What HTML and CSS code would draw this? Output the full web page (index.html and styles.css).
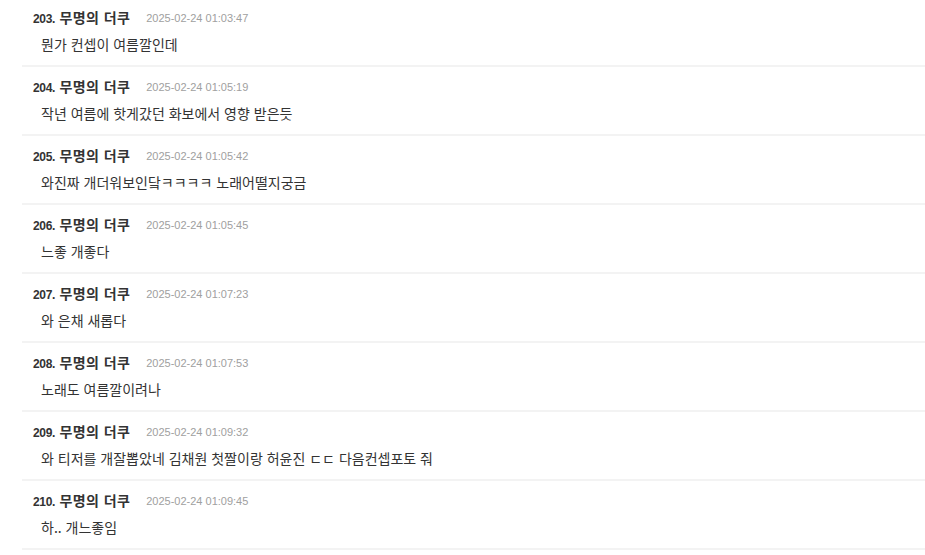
FILE: index.html
```html
<!DOCTYPE html>
<html lang="ko">
<head>
<meta charset="utf-8">
<title>댓글</title>
<link rel="stylesheet" href="styles.css">
</head>
<body>
<ul class="comments">
  <li class="comment">
    <div class="meta"><span class="author"><span class="num">203.</span> 무명의 더쿠</span><span class="date">2025-02-24 01:03:47</span></div>
    <p class="text">뭔가 컨셉이 여름깔인데</p>
  </li>
  <li class="comment">
    <div class="meta"><span class="author"><span class="num">204.</span> 무명의 더쿠</span><span class="date">2025-02-24 01:05:19</span></div>
    <p class="text">작년 여름에 핫게갔던 화보에서 영향 받은듯</p>
  </li>
  <li class="comment">
    <div class="meta"><span class="author"><span class="num">205.</span> 무명의 더쿠</span><span class="date">2025-02-24 01:05:42</span></div>
    <p class="text">와진짜 개더워보인닼ㅋㅋㅋㅋ 노래어떨지궁금</p>
  </li>
  <li class="comment">
    <div class="meta"><span class="author"><span class="num">206.</span> 무명의 더쿠</span><span class="date">2025-02-24 01:05:45</span></div>
    <p class="text">느좋 개좋다</p>
  </li>
  <li class="comment">
    <div class="meta"><span class="author"><span class="num">207.</span> 무명의 더쿠</span><span class="date">2025-02-24 01:07:23</span></div>
    <p class="text">와 은채 새롭다</p>
  </li>
  <li class="comment">
    <div class="meta"><span class="author"><span class="num">208.</span> 무명의 더쿠</span><span class="date">2025-02-24 01:07:53</span></div>
    <p class="text">노래도 여름깔이려나</p>
  </li>
  <li class="comment">
    <div class="meta"><span class="author"><span class="num">209.</span> 무명의 더쿠</span><span class="date">2025-02-24 01:09:32</span></div>
    <p class="text">와 티저를 개잘뽑았네 김채원 첫짤이랑 허윤진 ㄷㄷ 다음컨셉포토 줘</p>
  </li>
  <li class="comment">
    <div class="meta"><span class="author"><span class="num">210.</span> 무명의 더쿠</span><span class="date">2025-02-24 01:09:45</span></div>
    <p class="text">하.. 개느좋임</p>
  </li>
</ul>
</body>
</html>
```
FILE: styles.css
```css
html, body {
  margin: 0;
  padding: 0;
  background: #ffffff;
}
body {
  font-family: "Noto Sans CJK KR", "Noto Sans", sans-serif;
  color: #333333;
}
.comments {
  list-style: none;
  margin: -2px 0 0 22px;
  padding: 0;
}
.comment {
  padding: 10px 0 11px 11px;
  border-bottom: 2px solid #f3f3f3;
}
.meta {
  display: flex;
  align-items: center;
  height: 20px;
}
.author {
  font-size: 14px;
  font-weight: 700;
  letter-spacing: 0.4px;
  color: #333333;
  line-height: 20px;
}
.num {
  font-family: "Liberation Sans", sans-serif;
  font-size: 12px;
  letter-spacing: -0.3px;
}
.date {
  margin-left: 16px;
  font-family: "Liberation Sans", sans-serif;
  font-size: 11px;
  color: #a0a0a0;
  line-height: 20px;
}
.text {
  margin: 6px 0 0 8px;
  font-size: 14px;
  line-height: 20px;
  color: #333333;
}
```
